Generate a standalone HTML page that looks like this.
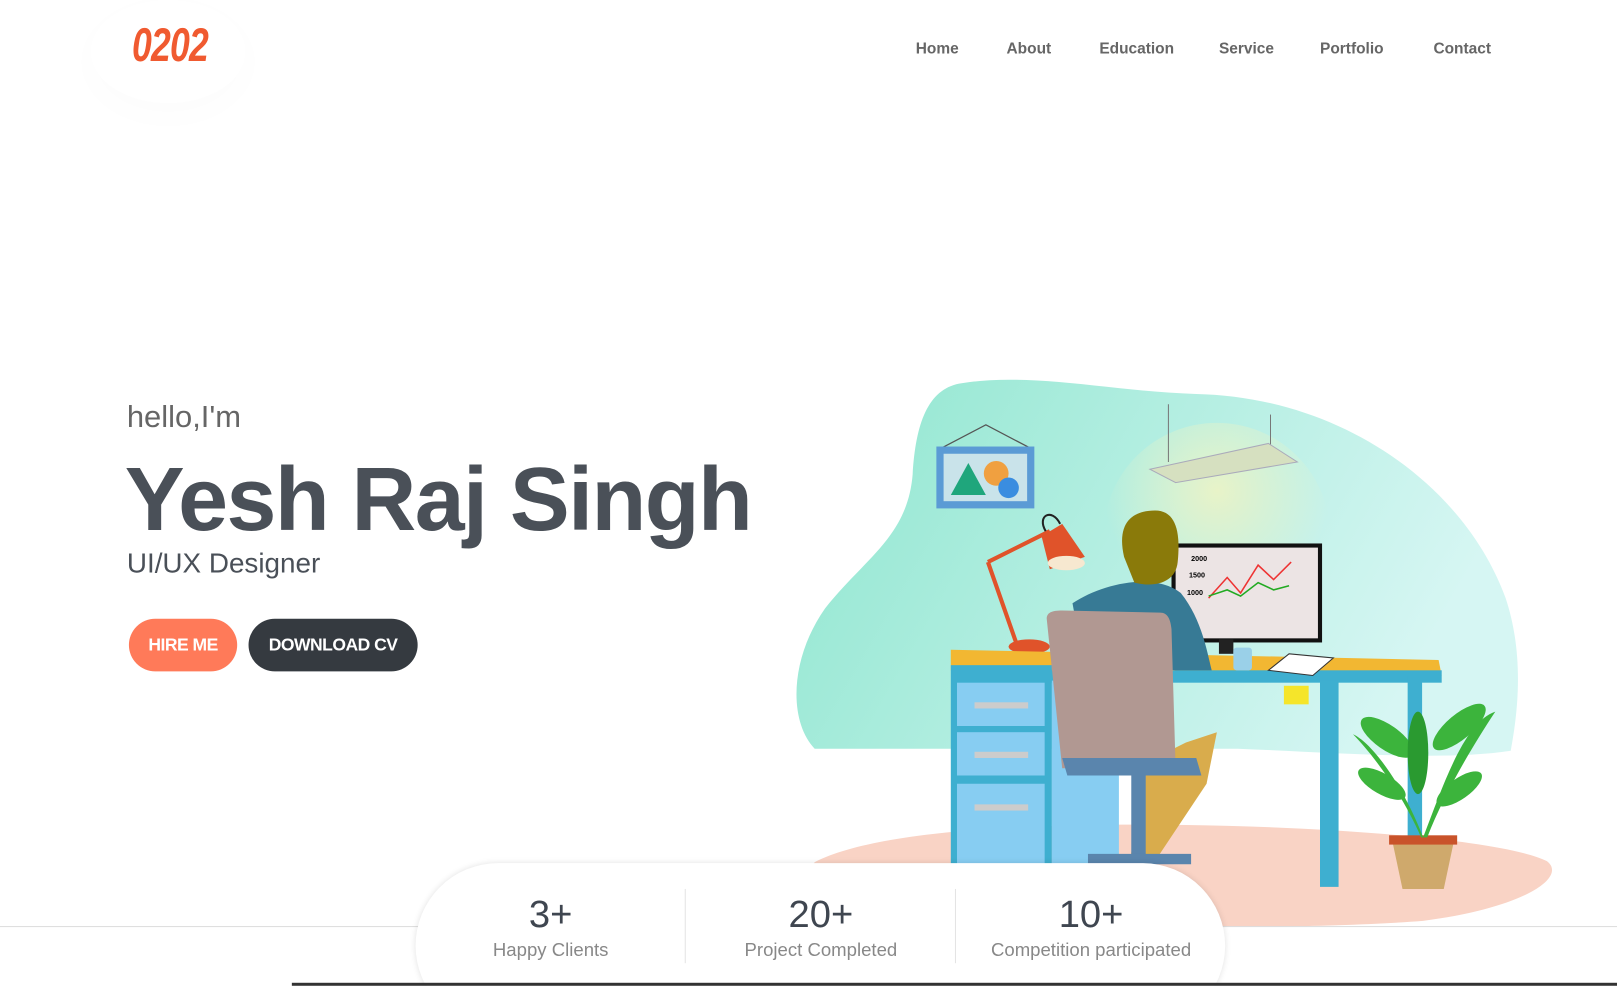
<!DOCTYPE html>
<html><head><meta charset="utf-8"><style>
html,body{margin:0;padding:0;width:1617px;height:986px;overflow:hidden;background:#fff}
#w{position:absolute;left:0;top:0;width:1568px;height:956px;transform:scale(1.03125);transform-origin:0 0;font-family:"Liberation Sans",sans-serif;overflow:hidden}
.a{position:absolute}
.nav a{position:absolute;top:39px;font-size:15px;font-weight:bold;color:#666;text-decoration:none}
.btn{position:absolute;top:600px;height:51px;border-radius:26px;color:#fff;font-weight:bold;font-size:17px;line-height:51px;text-align:center;letter-spacing:-0.5px}
.st{position:absolute;top:867px;width:262px;text-align:center}
.st b{display:block;font-size:37px;font-weight:normal;color:#3f4650;line-height:40px}
.st span{display:block;font-size:18px;color:#888;margin-top:4px}
</style></head><body><div id="w">
<div class="a" style="left:88px;top:0;width:150px;height:100px;border-radius:50%;box-shadow:0 10px 40px rgba(0,0,0,0.015)"></div>
<div class="a" style="left:128px;top:16px;font-size:46px;font-weight:bold;color:#f05a30;transform:scaleX(0.75);transform-origin:0 0;font-style:italic;letter-spacing:-1px">0202</div>
<div class="nav"><a style="left:888px">Home</a><a style="left:976px">About</a><a style="left:1066px">Education</a><a style="left:1182px">Service</a><a style="left:1280px">Portfolio</a><a style="left:1390px">Contact</a></div>

<svg class="a" style="left:0;top:0" width="1568" height="956" viewBox="0 0 1568 956">
<defs>
<linearGradient id="bg" x1="0" y1="0" x2="1" y2="0.3"><stop offset="0" stop-color="#8fe6cf"/><stop offset="1" stop-color="#d6f6f3"/></linearGradient>
<radialGradient id="lt" cx="0.5" cy="0.3" r="0.5"><stop offset="0" stop-color="#e8f3c8"/><stop offset="1" stop-color="#e8f3c8" stop-opacity="0"/></radialGradient>
</defs>
<path d="M930 372 C1000 360 1080 380 1160 382 C1300 385 1420 470 1460 580 C1480 640 1470 700 1465 728 C1400 738 1300 730 1200 726 L790 726 C765 700 765 640 800 590 C840 540 880 520 885 460 C888 410 900 378 930 372Z" fill="url(#bg)"/>
<ellipse cx="1180" cy="520" rx="110" ry="110" fill="url(#lt)"/>
<path d="M790 836 C850 805 1000 798 1150 800 C1300 802 1460 815 1500 835 C1520 850 1480 880 1380 893 C1250 903 1000 900 900 880 C820 865 780 850 790 836Z" fill="#f9d3c5"/>
<path d="M912 435 L956 412 L1000 435" stroke="#555" fill="none" stroke-width="1.2"/>
<rect x="908" y="433" width="95" height="60" fill="#5b9bd5"/>
<rect x="915" y="440" width="81" height="46" fill="#c9e3ea"/>
<path d="M922 480 L939 449 L956 480Z" fill="#1fa67c"/>
<circle cx="966" cy="459" r="12" fill="#f0a040"/><circle cx="978" cy="473" r="10" fill="#3a8de0"/>
<line x1="1133" y1="392" x2="1133" y2="448" stroke="#777"/><line x1="1232" y1="402" x2="1232" y2="438" stroke="#777"/>
<path d="M1115 455 L1230 430 L1258 448 L1140 468Z" fill="#d6e0c0" stroke="#aab" />
<path d="M958 545 L986 625" stroke="#e0532a" stroke-width="4"/><path d="M958 545 L1018 515" stroke="#e0532a" stroke-width="4"/>
<path d="M1010 520 L1030 508 L1052 540 L1018 552Z" fill="#e0532a"/>
<ellipse cx="1034" cy="546" rx="18" ry="7" fill="#f7e8d0"/>
<path d="M1014 515 C1005 500 1020 492 1028 508" stroke="#222" fill="none" stroke-width="2"/>
<ellipse cx="998" cy="627" rx="20" ry="7" fill="#e0532a"/>
<rect x="1136" y="527" width="146" height="96" fill="#111"/>
<rect x="1140" y="531" width="138" height="88" fill="#ece4e4"/>
<polyline points="1172,580 1190,560 1203,575 1220,548 1235,562 1252,545" stroke="#e33" fill="none" stroke-width="1.5"/>
<polyline points="1172,578 1190,572 1203,578 1220,565 1235,572 1250,568" stroke="#2a2" fill="none" stroke-width="1.5"/>
<text x="1155" y="544" font-size="7" font-weight="bold">2000</text><text x="1153" y="560" font-size="7" font-weight="bold">1500</text><text x="1151" y="577" font-size="7" font-weight="bold">1000</text>
<rect x="1182" y="620" width="14" height="14" fill="#222"/>
<path d="M922 630 L1395 640 L1398 655 L922 650Z" fill="#f2b732"/>
<rect x="922" y="645" width="98" height="215" fill="#3eafd0"/>
<rect x="1018" y="650" width="380" height="12" fill="#3eafd0"/>
<rect x="1280" y="660" width="18" height="200" fill="#3eafd0"/>
<rect x="1365" y="655" width="14" height="170" fill="#3eafd0"/>
<rect x="928" y="662" width="85" height="42" fill="#87cdf2"/><rect x="928" y="710" width="85" height="42" fill="#87cdf2"/><rect x="928" y="760" width="85" height="95" fill="#87cdf2"/>
<rect x="945" y="681" width="52" height="6" fill="#ccc"/><rect x="945" y="729" width="52" height="6" fill="#ccc"/><rect x="945" y="780" width="52" height="6" fill="#ccc"/>
<rect x="1020" y="660" width="65" height="200" fill="#87cdf2"/>
<rect x="1245" y="665" width="24" height="18" fill="#f5e52a"/>
<path d="M1230 650 L1250 634 L1293 638 L1273 655Z" fill="#fff" stroke="#333"/>
<rect x="1196" y="628" width="18" height="22" rx="3" fill="#9ad0e8"/>
<path d="M1095 840 L1110 740 L1150 720 L1180 710 L1170 760 L1120 835Z" fill="#d9ac4c"/>
<path d="M1040 585 C1070 565 1120 555 1145 575 C1165 600 1170 630 1175 650 L1140 650 L1050 640Z" fill="#377a95"/>
<path d="M1090 540 C1082 505 1100 495 1120 495 C1140 495 1145 515 1142 545 C1140 565 1120 570 1100 565Z" fill="#8a7a0a"/>
<path d="M1015 600 C1015 594 1020 592 1030 592 L1125 594 C1132 594 1135 600 1136 610 L1140 745 L1030 745Z" fill="#b19892"/>
<path d="M1030 735 L1160 735 L1165 752 L1035 752Z" fill="#5a85ad"/>
<rect x="1097" y="752" width="14" height="80" fill="#5a85ad"/>
<path d="M1055 828 L1155 828 L1155 838 L1055 838Z" fill="#5a85ad"/>
<path d="M1350 815 L1410 815 L1400 862 L1360 862Z" fill="#cfa96c"/>
<rect x="1347" y="810" width="66" height="9" fill="#c9532a"/>
<g fill="#3cb43c">
<path d="M1380 812 C1360 760 1330 720 1312 712 C1330 730 1360 770 1378 812Z"/>
<path d="M1380 812 C1400 760 1420 700 1450 690 C1430 720 1400 770 1384 812Z"/>
<ellipse cx="1345" cy="715" rx="30" ry="12" transform="rotate(35 1345 715)"/>
<ellipse cx="1415" cy="705" rx="32" ry="12" transform="rotate(-40 1415 705)"/>
<ellipse cx="1340" cy="760" rx="26" ry="10" transform="rotate(30 1340 760)"/>
<ellipse cx="1415" cy="765" rx="26" ry="10" transform="rotate(-35 1415 765)"/>
<ellipse cx="1375" cy="730" rx="10" ry="40" fill="#2a9a30"/>
</g>
</svg>

<div class="a" style="left:123px;top:388px;font-size:30px;color:#666">hello,I'm</div>
<div class="a" style="left:121px;top:430px;font-size:87px;font-weight:bold;color:#4a5058;letter-spacing:-1.5px;line-height:110px">Yesh Raj Singh</div>
<div class="a" style="left:123px;top:531px;font-size:27px;color:#4a5058">UI/UX Designer</div>
<div class="btn" style="left:125px;width:105px;background:#ff7a59">HIRE ME</div>
<div class="btn" style="left:241px;width:164px;background:#353a40">DOWNLOAD CV</div>

<div class="a" style="left:0;top:898px;width:1568px;height:1px;background:#ddd"></div>
<div class="a" style="left:403px;top:837px;width:785px;height:160px;border-radius:80px;background:#fff;box-shadow:0 0 6px rgba(0,0,0,0.12)"></div>
<div class="a" style="left:283px;top:953px;width:1285px;height:3px;background:#333"></div>
<div class="a" style="left:664px;top:862px;width:1px;height:72px;background:#e4e4e4"></div>
<div class="a" style="left:926px;top:862px;width:1px;height:72px;background:#e4e4e4"></div>
<div class="st" style="left:403px"><b>3+</b><span>Happy Clients</span></div>
<div class="st" style="left:665px"><b>20+</b><span>Project Completed</span></div>
<div class="st" style="left:927px"><b>10+</b><span>Competition participated</span></div>
</div></body></html>
